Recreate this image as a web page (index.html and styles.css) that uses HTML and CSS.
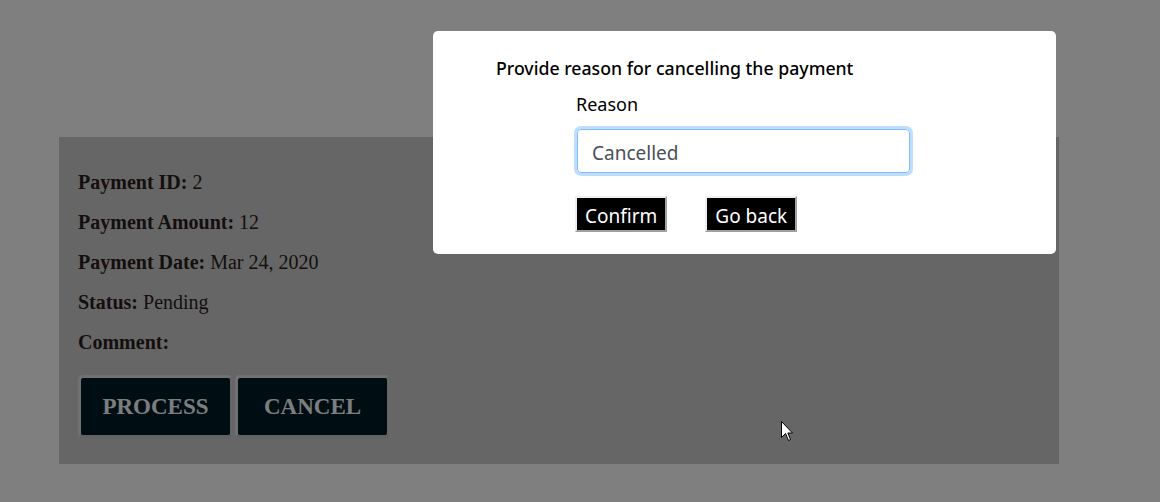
FILE: index.html
```html
<!DOCTYPE html>
<html>
<head>
<meta charset="utf-8">
<link rel="stylesheet" href="styles.css">
</head>
<body>
<main class="page">
  <section class="card">
    <p class="row"><b>Payment ID:</b> 2</p>
    <p class="row"><b>Payment Amount:</b> 12</p>
    <p class="row"><b>Payment Date:</b> Mar 24, 2020</p>
    <p class="row"><b>Status:</b> Pending</p>
    <p class="row"><b>Comment:</b></p>
    <div class="actions">
      <button class="action">PROCESS</button>
      <button class="action">CANCEL</button>
    </div>
  </section>
</main>
<div class="backdrop"></div>
<div class="modal">
  <h5 class="modal-title">Provide reason for cancelling the payment</h5>
  <div class="form">
    <label class="label">Reason</label>
    <div class="input">Cancelled</div>
    <div class="modal-actions">
      <button class="mbtn">Confirm</button>
      <button class="mbtn">Go back</button>
    </div>
  </div>
</div>
<svg class="cursor" width="13" height="21" viewBox="0 0 13 21">
  <path d="M0.5 0.5 L0.5 16.5 L4.5 12.5 L7.5 19.5 L9.5 18.5 L6.8 12 L11.5 12 Z" fill="#fff" stroke="#000" stroke-width="1"/>
</svg>
</body>
</html>
```
FILE: styles.css
```css
* { box-sizing: border-box; }
html, body { margin: 0; padding: 0; }
body {
  width: 1160px;
  height: 502px;
  background: #ffffff;
  overflow: hidden;
  font-family: "Liberation Serif", "Times New Roman", serif;
}
.page {
  padding: 137px 0 0 59px;
}
.card {
  width: 1000px;
  height: 327px;
  background: #cccccc;
  padding: 34px 19px 0 19px;
}
.row {
  margin: 0 0 17px 0;
  font-size: 20px;
  line-height: 23px;
  color: #2a1c1c;
}
.actions {
  display: flex;
  gap: 2px;
  margin-top: 21px;
}
.action {
  flex: 0 0 155px;
  width: 155px;
  height: 63px;
  background: #001a24;
  color: #f8fbff;
  border: 3px solid #e2e2e2;
  border-bottom-color: #c4c4c4;
  border-right-color: #cccccc;
  border-radius: 5px;
  font-family: "Liberation Serif", "Times New Roman", serif;
  font-weight: bold;
  font-size: 23px;
  padding: 0;
}
.backdrop {
  position: fixed;
  inset: 0;
  background: rgba(0, 0, 0, 0.5);
}
.modal {
  position: fixed;
  left: 433px;
  top: 31px;
  width: 623px;
  height: 223px;
  background: #fff;
  border-radius: 5px;
  padding: 26px 0 0 63px;
  font-family: "Noto Sans", "Open Sans", sans-serif;
}
.modal-title {
  margin: 0;
  font-size: 17.7px;
  font-weight: 500;
  line-height: 22px;
  color: #000;
}
.form {
  padding-left: 80px;
  padding-top: 12px;
}
.label {
  display: block;
  font-size: 18px;
  line-height: 26px;
  color: #000;
}
.input {
  margin-top: 12px;
  margin-left: 1px;
  width: 333px;
  height: 44px;
  border: 1px solid #80bdff;
  border-radius: 4px;
  box-shadow: 0 0 0 3px rgba(0, 123, 255, 0.25);
  padding: 5px 14px 0;
  font-size: 19px;
  line-height: 36px;
  color: #495057;
}
.modal-actions {
  display: flex;
  gap: 38px;
  margin-top: 23px;
  margin-left: -1px;
}
.mbtn {
  background: #000;
  color: #fff;
  border: 2px solid;
  border-color: #efefef #a0a0a0 #a0a0a0 #efefef;
  font-family: "Noto Sans", "Open Sans", sans-serif;
  font-size: 19px;
  line-height: 24px;
  height: 36px;
  padding: 4px 8px 0;
}
.cursor {
  position: fixed;
  left: 781px;
  top: 421px;
}
```
